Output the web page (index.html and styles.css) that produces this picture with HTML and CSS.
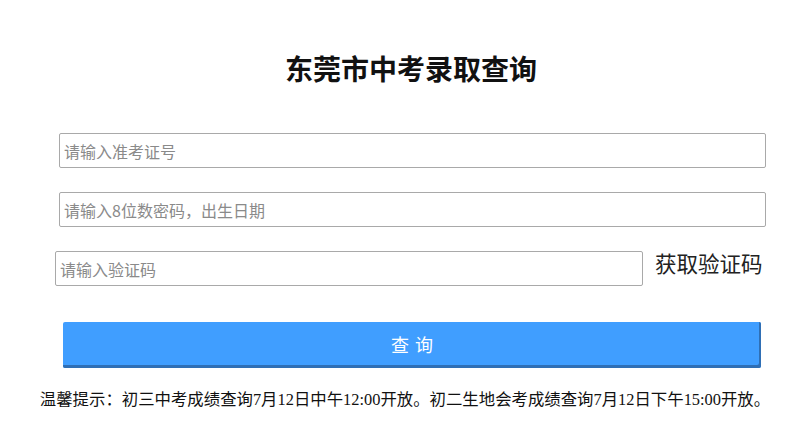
FILE: index.html
```html
<!DOCTYPE html>
<html lang="zh-CN">
<head>
<meta charset="utf-8">
<title>东莞市中考录取查询</title>
<link rel="stylesheet" href="styles.css">
</head>
<body>
<div class="page">
  <h1 class="title">东莞市中考录取查询</h1>
  <form class="form">
    <div class="row">
      <input class="field field-full" type="text" placeholder="请输入准考证号">
    </div>
    <div class="row">
      <input class="field field-full" type="text" placeholder="请输入8位数密码，出生日期">
    </div>
    <div class="row row-code">
      <input class="field field-code" type="text" placeholder="请输入验证码">
      <span class="get-code">获取验证码</span>
    </div>
    <div class="row row-btn">
      <button class="btn" type="button">查询</button>
    </div>
  </form>
  <p class="tip">温馨提示：初三中考成绩查询7月12日中午12:00开放。初二生地会考成绩查询7月12日下午15:00开放。</p>
</div>
</body>
</html>
```

FILE: styles.css
```css
* { box-sizing: border-box; }
html, body { margin: 0; padding: 0; background: #fff; }
body {
  font-family: "Noto Sans CJK SC", "Noto Sans", sans-serif;
  color: #333;
  width: 800px;
  height: 428px;
  overflow: hidden;
}
.page {
  padding-top: 48px;
}
.title {
  margin: 0;
  text-align: center;
  padding-left: 22px;
  font-size: 28px;
  line-height: 40px;
  font-weight: 700;
  color: #111;
}
.form {
  margin-top: 45px;
  display: flex;
  flex-direction: column;
  gap: 24px;
}
.row {
  display: flex;
  align-items: center;
  padding-left: 59px;
}
.field {
  height: 35px;
  border: 1px solid #a9a9a9;
  border-radius: 2px;
  padding: 0 4px;
  font-family: "Noto Sans CJK SC", sans-serif;
  font-size: 16px;
  color: #333;
  outline: none;
  background: #fff;
}
.field::placeholder { color: #8a8a8a; }
.field-full { width: 707px; }
.row-code { padding-left: 55px; }
.field-code { width: 588px; }
.get-code {
  margin-left: 12px;
  font-size: 21.5px;
  line-height: 30px;
  color: #222;
  margin-top: -12px;
}
.row-btn {
  padding-left: 63px;
  margin-top: 12px;
}
.btn {
  width: 698px;
  height: 46px;
  border: 0;
  border-radius: 2px;
  background: #409eff;
  box-shadow: inset -2px -3px 0 #2f6fb5;
  color: #fff;
  font-family: "Noto Sans CJK SC", sans-serif;
  font-size: 18px;
  letter-spacing: 6px;
  text-indent: 6px;
  padding: 0 0 3px;
}
.tip {
  margin: 20px 0 0;
  text-align: center;
  padding-left: 10px;
  font-family: "Liberation Serif", "Noto Sans CJK SC", serif;
  font-size: 16.4px;
  line-height: 24px;
  color: #111;
  white-space: nowrap;
}
```
